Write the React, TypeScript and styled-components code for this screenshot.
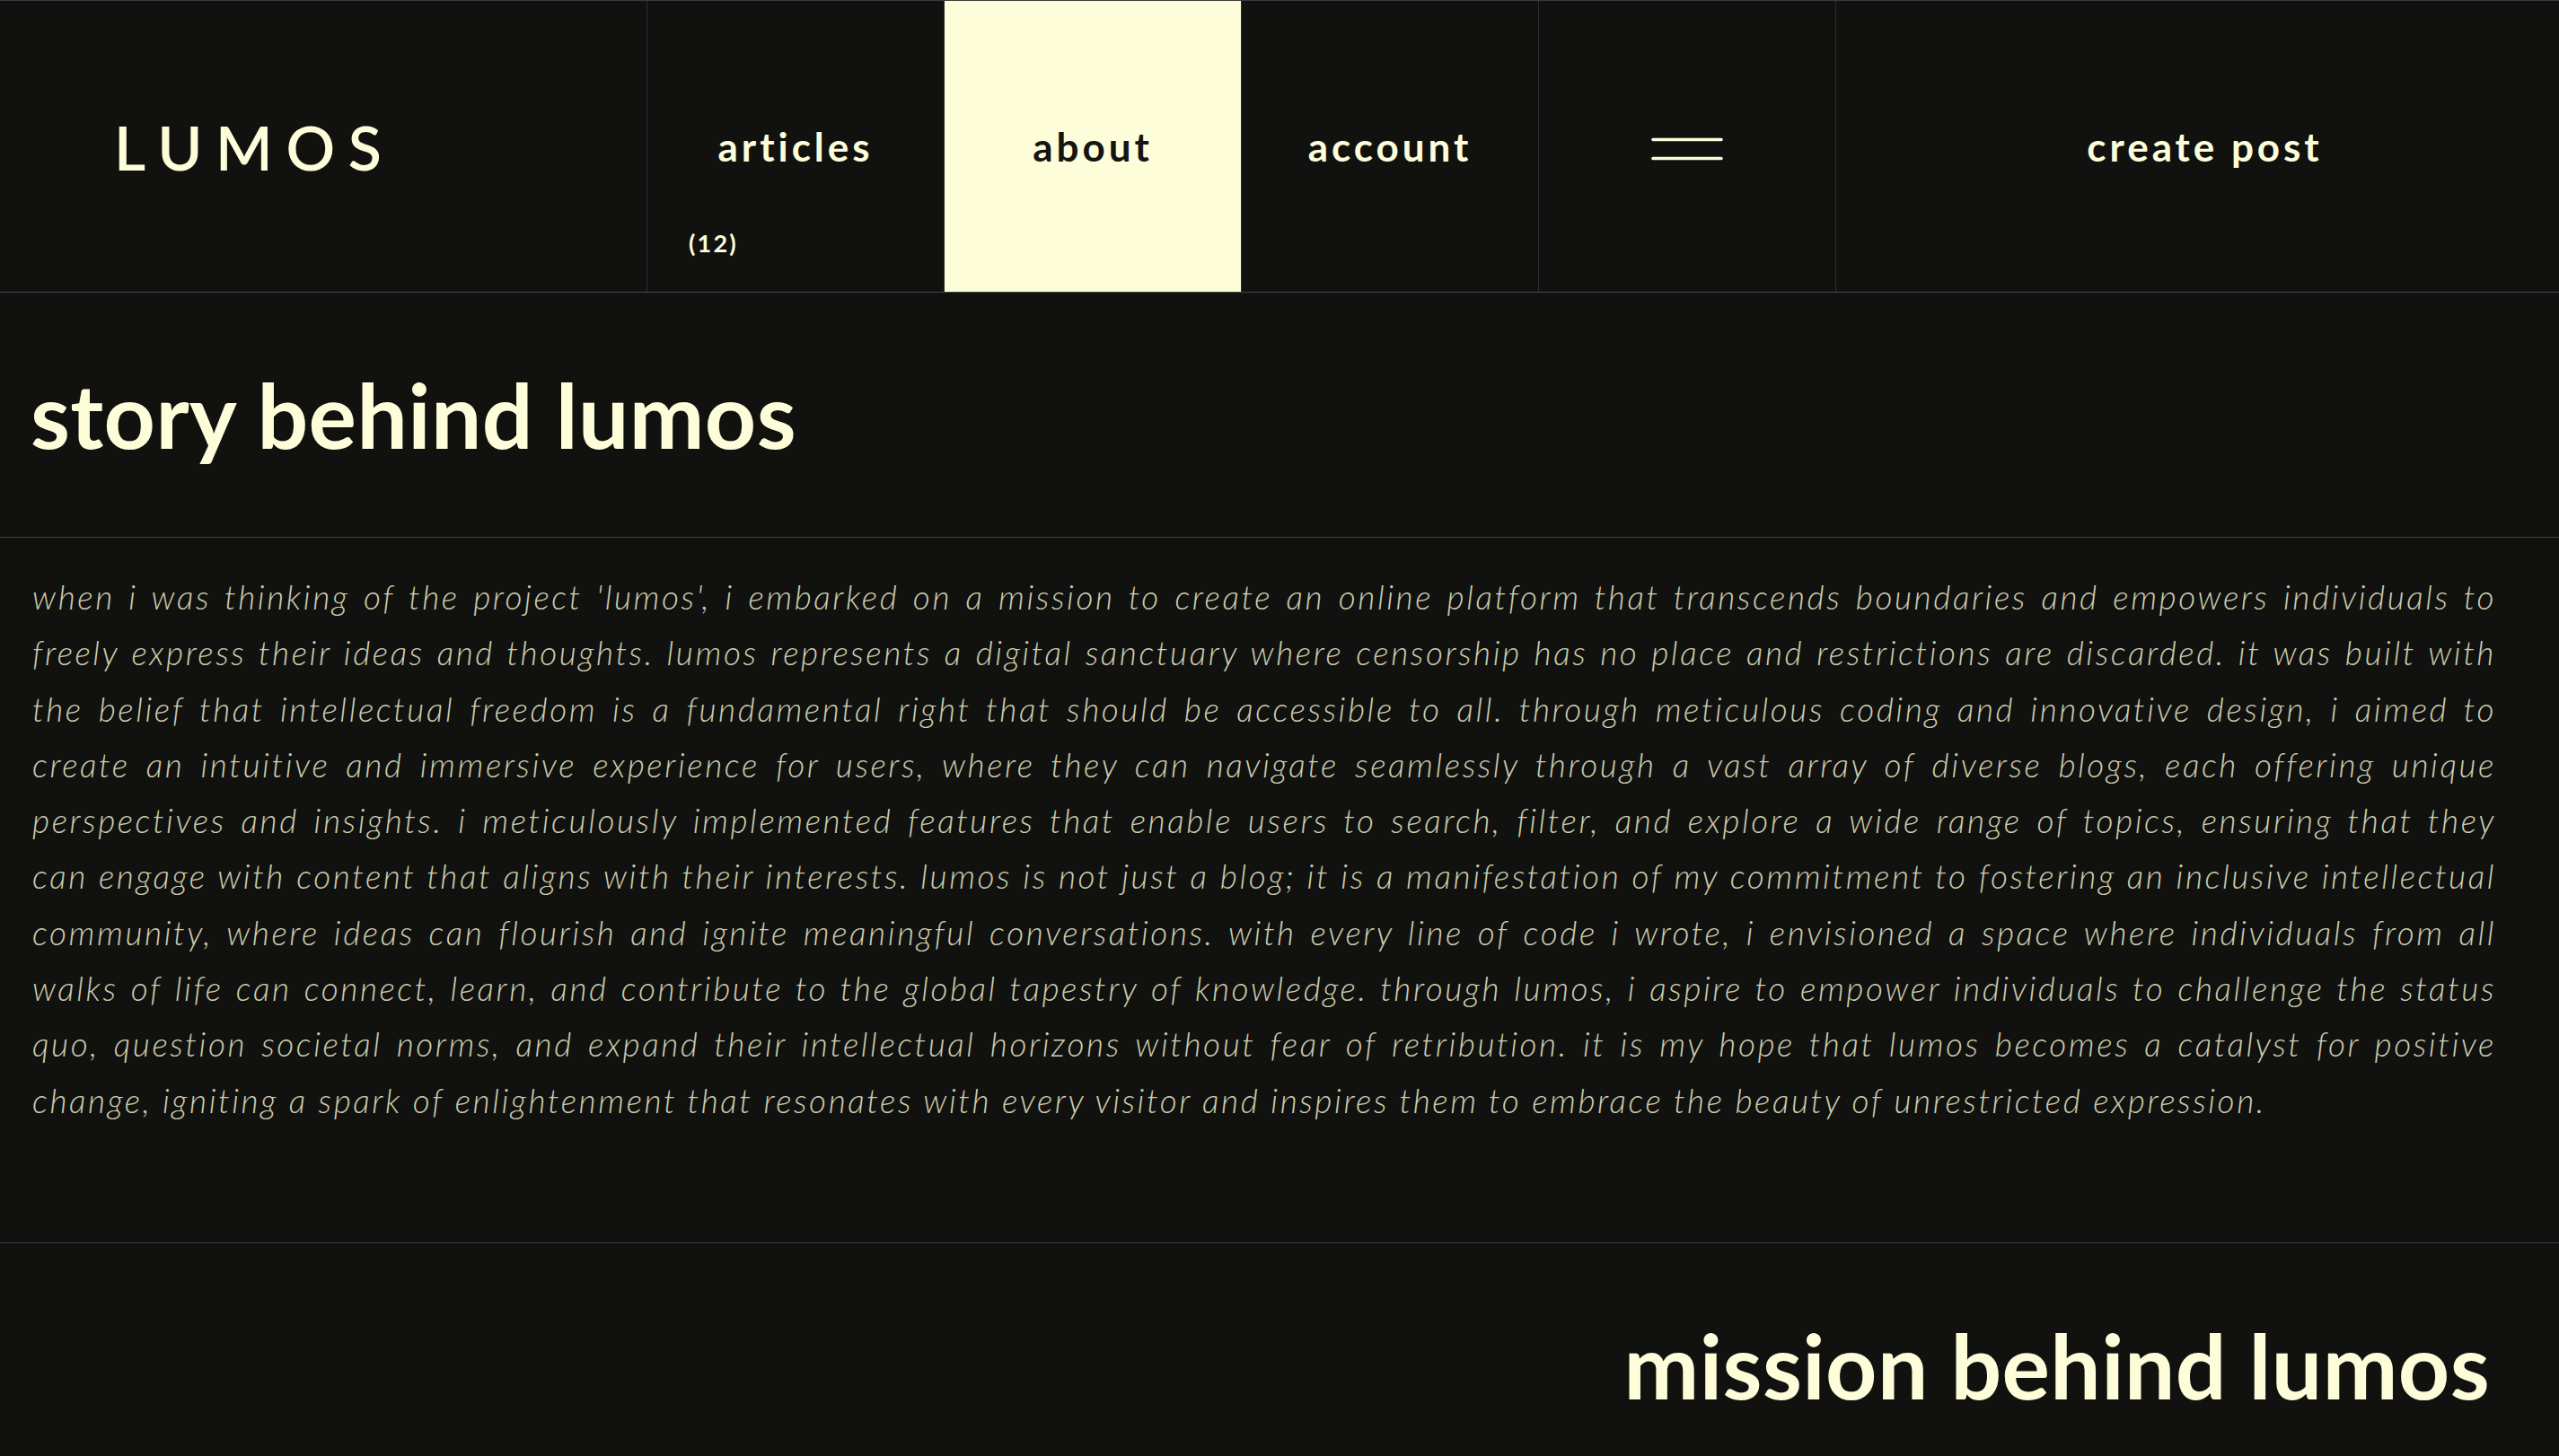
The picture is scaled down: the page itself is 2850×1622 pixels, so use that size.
import React from "react";
import styled, { createGlobalStyle } from "styled-components";

const CREAM = "#fdfdda";
const BG = "#111210";
const MUTED = "#cdcdae";

const GlobalStyle = createGlobalStyle`
  *, *::before, *::after { box-sizing: border-box; }
  html, body { margin: 0; padding: 0; background: ${BG}; }
  body { font-family: "Lato", "Liberation Sans", sans-serif; color: ${CREAM}; }
`;

const Page = styled.div`
  background: ${BG};
  min-height: 100vh;
`;

const Header = styled.header`
  display: grid;
  grid-template-columns: 720px repeat(4, 331px) 1fr;
  height: 326px;
  border-top: 1px solid #3b3b3b;
  border-bottom: 1px solid #444444;
`;

const Logo = styled.div`
  display: flex;
  align-items: center;
  padding-left: 127px;
  font-size: 68px;
  font-weight: 600;
  letter-spacing: 0.215em;
  color: ${CREAM};
`;

const NavCell = styled.a<{ $active?: boolean; $shift?: number }>`
  position: relative;
  display: flex;
  align-items: center;
  justify-content: center;
  padding-left: ${(p) => p.$shift ?? 0}px;
  border-left: 1px solid #2e2e2e;
  background: ${(p) => (p.$active ? CREAM : "transparent")};
  color: ${(p) => (p.$active ? "#151513" : CREAM)};
  font-size: 44px;
  font-weight: 700;
  letter-spacing: 0.09em;
  text-decoration: none;
  cursor: pointer;
`;

const Count = styled.span`
  position: absolute;
  left: 46px;
  bottom: 41px;
  font-size: 27px;
  font-weight: 700;
  line-height: 1;
  letter-spacing: 0.08em;
`;

const MenuIcon = styled.svg`
  display: block;
  margin-top: 6px;
`;

const HeadingBand = styled.section<{ $align: "left" | "right" }>`
  padding: 75px ${(p) => (p.$align === "right" ? "77px" : "34px")} 77px 34px;
  text-align: ${(p) => p.$align};
  border-bottom: 1px solid #3f3f3f;
`;

const Heading = styled.h2`
  margin: 0;
  font-size: 100px;
  line-height: 120px;
  font-weight: 700;
  letter-spacing: 0.004em;
  color: ${CREAM};
`;

const TextBand = styled.section`
  padding: 35px 70px 127px 36px;
  border-bottom: 1px solid #3f3f3f;
`;

const Paragraph = styled.p`
  margin: 0;
  font-size: 37px;
  line-height: 62.3px;
  font-style: italic;
  font-weight: 300;
  letter-spacing: 2.55px;
  color: ${MUTED};
  text-align: justify;
`;

const Line = styled.span<{ $last?: boolean }>`
  display: block;
  white-space: nowrap;
  text-align: ${(p) => (p.$last ? "left" : "justify")};
  text-align-last: ${(p) => (p.$last ? "left" : "justify")};
`;

const lines = [
  "when i was thinking of the project 'lumos', i embarked on a mission to create an online platform that transcends boundaries and empowers individuals to",
  "freely express their ideas and thoughts. lumos represents a digital sanctuary where censorship has no place and restrictions are discarded. it was built with",
  "the belief that intellectual freedom is a fundamental right that should be accessible to all. through meticulous coding and innovative design, i aimed to",
  "create an intuitive and immersive experience for users, where they can navigate seamlessly through a vast array of diverse blogs, each offering unique",
  "perspectives and insights. i meticulously implemented features that enable users to search, filter, and explore a wide range of topics, ensuring that they",
  "can engage with content that aligns with their interests. lumos is not just a blog; it is a manifestation of my commitment to fostering an inclusive intellectual",
  "community, where ideas can flourish and ignite meaningful conversations. with every line of code i wrote, i envisioned a space where individuals from all",
  "walks of life can connect, learn, and contribute to the global tapestry of knowledge. through lumos, i aspire to empower individuals to challenge the status",
  "quo, question societal norms, and expand their intellectual horizons without fear of retribution. it is my hope that lumos becomes a catalyst for positive",
  "change, igniting a spark of enlightenment that resonates with every visitor and inspires them to embrace the beauty of unrestricted expression.",
];

export default function App() {
  return (
    <Page>
      <GlobalStyle />
      <Header>
        <Logo>LUMOS</Logo>
        <NavCell>
          articles
          <Count>(12)</Count>
        </NavCell>
        <NavCell $active>about</NavCell>
        <NavCell>account</NavCell>
        <NavCell aria-label="menu">
          <MenuIcon width="84" height="28" viewBox="0 0 84 28">
            <line x1="4" y1="3.5" x2="80" y2="3.5" stroke={CREAM} strokeWidth="3.6" strokeLinecap="round" />
            <line x1="4" y1="24.5" x2="80" y2="24.5" stroke={CREAM} strokeWidth="3.6" strokeLinecap="round" />
          </MenuIcon>
        </NavCell>
        <NavCell $shift={16}>create post</NavCell>
      </Header>

      <HeadingBand $align="left">
        <Heading>story behind lumos</Heading>
      </HeadingBand>

      <TextBand>
        <Paragraph>
          {lines.map((l, i) => (
            <Line key={i} $last={i === lines.length - 1}>
              {l}
            </Line>
          ))}
        </Paragraph>
      </TextBand>

      <HeadingBand $align="right">
        <Heading>mission behind lumos</Heading>
      </HeadingBand>
    </Page>
  );
}
